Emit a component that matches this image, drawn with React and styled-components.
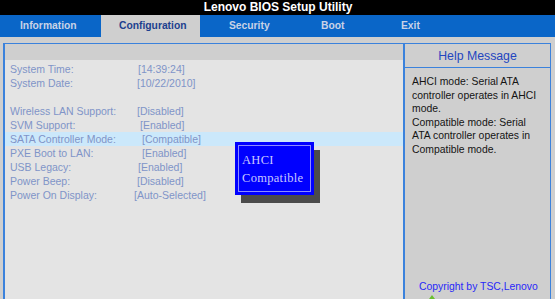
import React from "react";
import styled, { createGlobalStyle } from "styled-components";

const GlobalStyle = createGlobalStyle`
  html, body { margin: 0; padding: 0; background: #cfcfcf; overflow: hidden; }
  * { box-sizing: border-box; }
`;

const Screen = styled.div`
  width: 555px;
  height: 299px;
  overflow: hidden;
  display: flex;
  flex-direction: column;
  font-family: "Liberation Sans", Arial, sans-serif;
  background: #cfcfcf;
`;

const TitleBar = styled.div`
  height: 15px;
  background: #000;
  color: #fff;
  font-weight: bold;
  font-size: 12px;
  line-height: 15px;
  text-align: center;
  padding-left: 1px;
`;

const TabBar = styled.div`
  height: 22px;
  background: #0a66c8;
  display: flex;
`;

const Tab = styled.div`
  width: ${(p) => p.$w}px;
  padding-left: ${(p) => p.$pl}px;
  height: 22px;
  line-height: 21px;
  font-size: 10.3px;
  font-weight: bold;
  color: ${(p) => (p.$active ? "#1d3f8e" : "#c9d3e6")};
  background: ${(p) => (p.$active ? "#cfcfcf" : "transparent")};
  white-space: nowrap;
`;

const Body = styled.div`
  flex: 1;
  padding: 6px 4px 0 3px;
  display: flex;
`;

const Frame = styled.div`
  flex: 1;
  height: 270px;
  display: flex;
  border-top: 1px solid #3b82dc;
  border-left: 2px solid #3b82dc;
  position: relative;
`;

const LeftPanel = styled.div`
  width: 398px;
  display: flex;
  flex-direction: column;
`;

const LeftHeader = styled.div`
  height: 16px;
  background: #cfcfcf;
`;

const LeftContent = styled.div`
  flex: 1;
  background: #e4e4e4;
  padding-top: 2px;
`;

const Row = styled.div`
  height: 14px;
  display: grid;
  grid-template-columns: ${(p) => p.$col}px auto;
  padding-left: 5px;
  font-size: 10.5px;
  line-height: 14px;
  color: #8094c8;
  background: ${(p) => (p.$selected ? "#cbe8fb" : "transparent")};
  white-space: nowrap;
`;

const RightPanel = styled.div`
  flex: 1;
  display: flex;
  flex-direction: column;
  background: #cfcfcf;
  border-left: 2px solid #3b82dc;
  border-right: 1px solid #3b82dc;
`;

const HelpHeader = styled.div`
  height: 24px;
  border-bottom: 1px solid #3b82dc;
  text-align: center;
  font-size: 12.3px;
  line-height: 24px;
  color: #2346c0;
`;

const HelpText = styled.div`
  padding: 7px 6px 0 7px;
  font-size: 10.4px;
  line-height: 13.6px;
  color: #141414;
`;

const Footer = styled.div`
  margin-top: auto;
  padding-left: 14px;
  padding-bottom: 10px;
  display: flex;
  flex-direction: column;
`;

const Copyright = styled.div`
  font-size: 10.4px;
  line-height: 12px;
  color: #2828f8;
  white-space: nowrap;
`;

const GreenArrow = styled.div`
  margin-top: 2px;
  margin-left: 7px;
  width: 0;
  height: 0;
  border-left: 6px solid transparent;
  border-right: 6px solid transparent;
  border-bottom: 8px solid #6bbf2f;
`;

const Popup = styled.div`
  position: absolute;
  left: 230px;
  top: 98px;
  width: 79px;
  height: 53px;
  background: #0000ff;
  box-shadow: 6px 8px 0 #4b4b4b;
  padding: 3px;
`;

const PopupInner = styled.div`
  height: 100%;
  border: 1px solid #8c8cff;
  padding: 5px 0 0 3px;
`;

const PopupOption = styled.div`
  font-family: "Liberation Serif", "Times New Roman", serif;
  font-size: 12.5px;
  line-height: 18px;
  letter-spacing: 0.3px;
  color: #c8c8ff;
`;

const tabs = [
  { label: "Information", w: 101, pl: 20 },
  { label: "Configuration", w: 99, pl: 18, active: true },
  { label: "Security", w: 92, pl: 29 },
  { label: "Boot", w: 80, pl: 29 },
  { label: "Exit", w: 80, pl: 29 },
];

const rows = [
  { label: "System Time:", value: "[14:39:24]", x: 138 },
  { label: "System Date:", value: "[10/22/2010]", x: 137 },
  { label: "", value: "", x: 137 },
  { label: "Wireless LAN Support:", value: "[Disabled]", x: 137 },
  { label: "SVM Support:", value: "[Enabled]", x: 140 },
  { label: "SATA Controller Mode:", value: "[Compatible]", x: 142, selected: true },
  { label: "PXE Boot to LAN:", value: "[Enabled]", x: 142 },
  { label: "USB Legacy:", value: "[Enabled]", x: 138 },
  { label: "Power Beep:", value: "[Disabled]", x: 137 },
  { label: "Power On Display:", value: "[Auto-Selected]", x: 134 },
];

export default function App() {
  return (
    <>
      <GlobalStyle />
      <Screen>
        <TitleBar>Lenovo BIOS Setup Utility</TitleBar>
        <TabBar>
          {tabs.map((t) => (
            <Tab key={t.label} $w={t.w} $pl={t.pl} $active={t.active}>
              {t.label}
            </Tab>
          ))}
        </TabBar>
        <Body>
          <Frame>
            <LeftPanel>
              <LeftHeader />
              <LeftContent>
                {rows.map((r, i) => (
                  <Row key={i} $col={r.x - 10} $selected={r.selected}>
                    <span>{r.label}</span>
                    <span>{r.value}</span>
                  </Row>
                ))}
              </LeftContent>
            </LeftPanel>
            <RightPanel>
              <HelpHeader>Help Message</HelpHeader>
              <HelpText>
                AHCI mode: Serial ATA
                <br />
                controller operates in AHCI
                <br />
                mode.
                <br />
                Compatible mode: Serial
                <br />
                ATA controller operates in
                <br />
                Compatible mode.
              </HelpText>
              <Footer>
                <Copyright>Copyright by TSC,Lenovo</Copyright>
                <GreenArrow />
              </Footer>
            </RightPanel>
            <Popup>
              <PopupInner>
                <PopupOption>AHCI</PopupOption>
                <PopupOption>Compatible</PopupOption>
              </PopupInner>
            </Popup>
          </Frame>
        </Body>
      </Screen>
    </>
  );
}
